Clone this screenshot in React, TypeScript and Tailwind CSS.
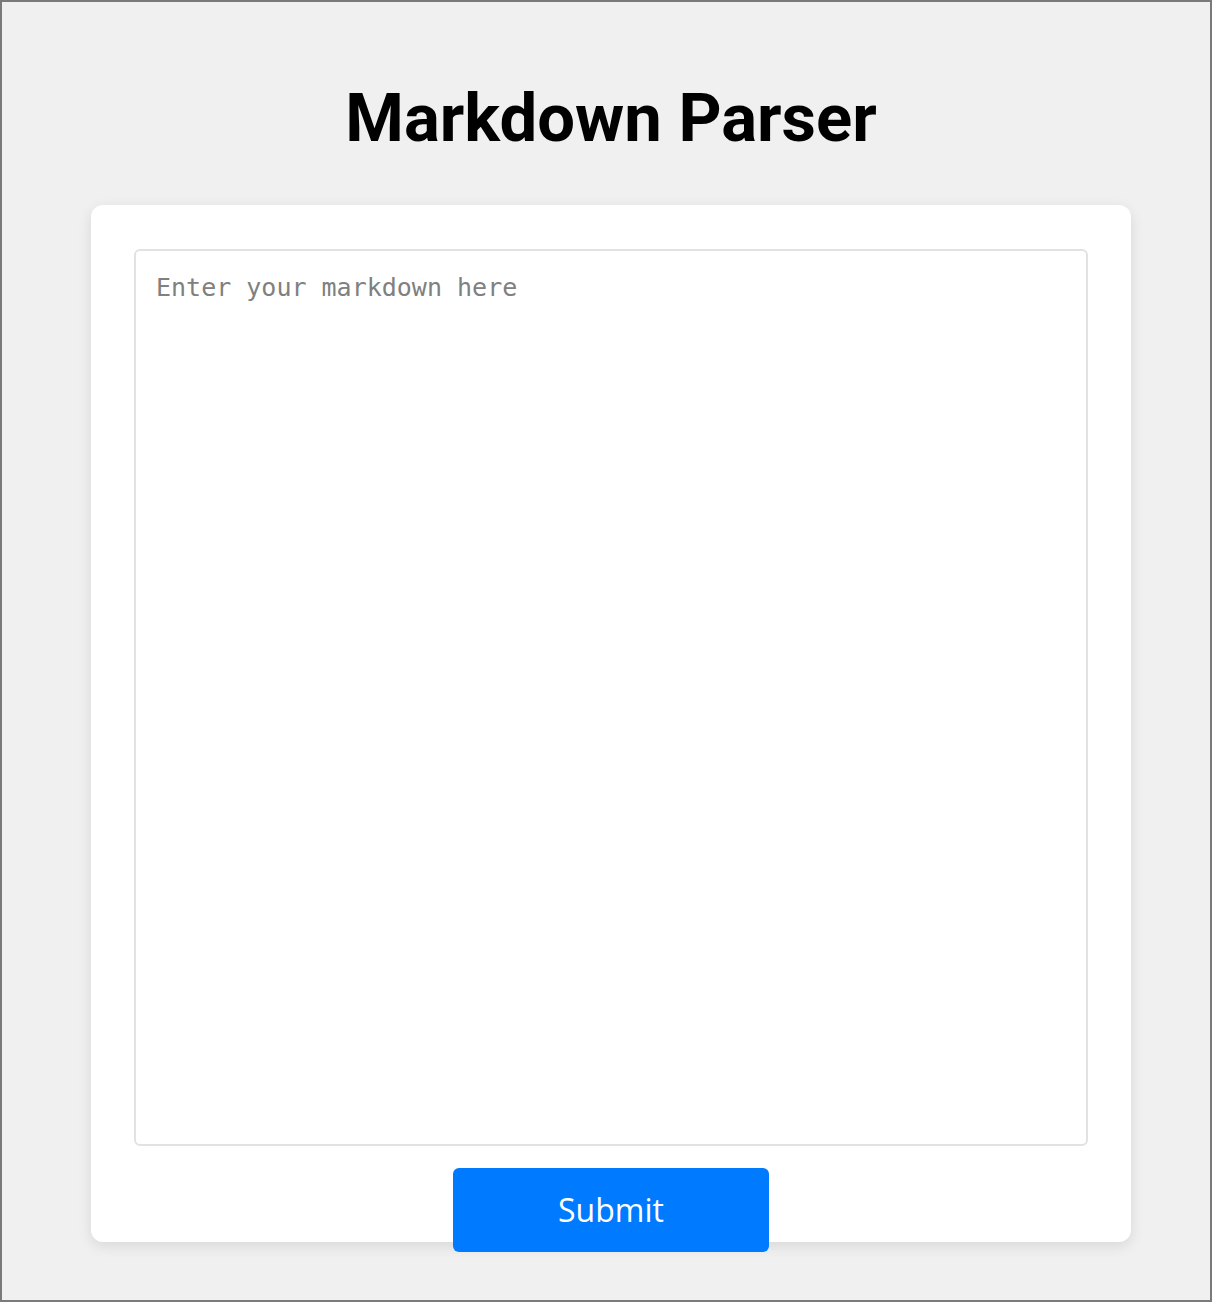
export default function App() {
  return (
    <div className="h-[1302px] w-full overflow-hidden border-2 border-[#7a7a7a] bg-[#f0f0f0]">
      <div className="flex flex-col items-center pl-[10px]">
        <h1 className="mt-[83px] text-[67px] font-bold leading-[67px] text-black [font-family:Roboto,'Liberation_Sans',sans-serif]">
          Markdown Parser
        </h1>
        <div className="mt-[53px] flex h-[1037px] w-[1040px] flex-col items-center rounded-[12px] bg-white px-[43px] pt-[44px] shadow-[0_4px_14px_rgba(0,0,0,0.1)]">
          <textarea
            placeholder="Enter your markdown here"
            className="h-[897px] w-full shrink-0 resize-none rounded-[6px] border-2 border-[#e2e2e2] bg-white px-[20px] py-[18px] text-[25px] leading-normal text-black outline-none placeholder:text-[#808080] [font-family:'DejaVu_Sans_Mono',monospace]"
          />
          <button className="mt-[22px] h-[84px] w-[316px] shrink-0 rounded-[6px] bg-[#007bff] text-[32px] text-white [font-family:'Open_Sans','Noto_Sans',sans-serif]">
            Submit
          </button>
        </div>
      </div>
    </div>
  );
}
